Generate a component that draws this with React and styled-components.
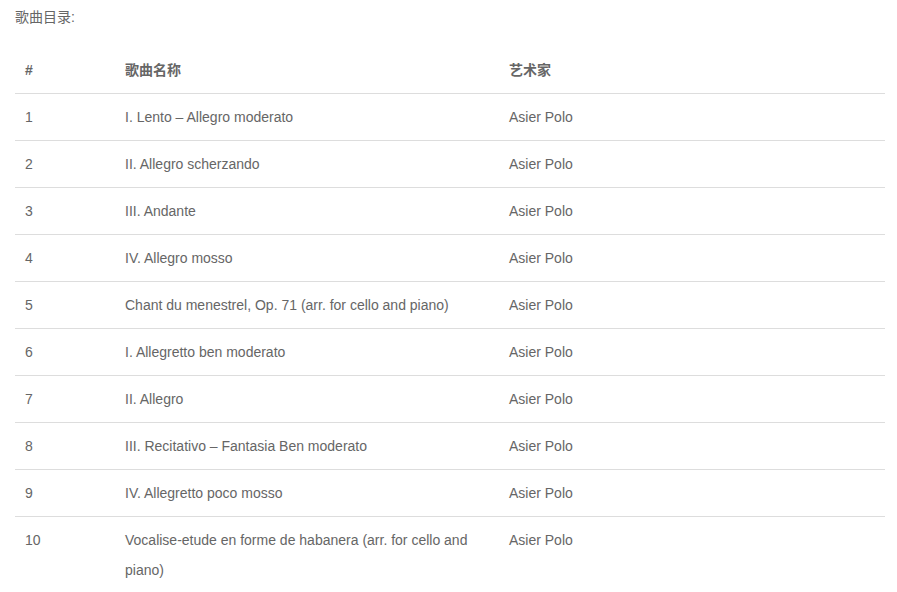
import React from "react";
import styled, { createGlobalStyle } from "styled-components";

const Global = createGlobalStyle`
  *, *::before, *::after { box-sizing: border-box; }
  html, body { margin: 0; padding: 0; background: #fff; }
  body {
    font-family: "Liberation Sans", Arial, "Noto Sans CJK SC", sans-serif;
    font-size: 14px;
    color: #666;
  }
`;

const Wrap = styled.div`
  padding: 2px 12px 0 15px;
`;

const Title = styled.div`
  line-height: 30px;
  margin-bottom: 15px;
`;

const Table = styled.table`
  width: 870px;
  border-collapse: collapse;
  table-layout: fixed;
`;

const Th = styled.th`
  text-align: left;
  font-weight: bold;
  padding: 8px 10px;
  line-height: 30px;
  border-bottom: 1px solid #ddd;
  width: ${(p) => p.$w}px;
`;

const Td = styled.td`
  padding: 8px 10px;
  line-height: 30px;
  vertical-align: top;
  border-top: ${(p) => (p.$first ? "none" : "1px solid #ddd")};
`;

const rows = [
  "I. Lento – Allegro moderato",
  "II. Allegro scherzando",
  "III. Andante",
  "IV. Allegro mosso",
  "Chant du menestrel, Op. 71 (arr. for cello and piano)",
  "I. Allegretto ben moderato",
  "II. Allegro",
  "III. Recitativo – Fantasia Ben moderato",
  "IV. Allegretto poco mosso",
  "Vocalise-etude en forme de habanera (arr. for cello and piano)",
];

export default function App() {
  return (
    <Wrap>
      <Global />
      <Title>歌曲目录:</Title>
      <Table>
        <thead>
          <tr>
            <Th $w={100}>#</Th>
            <Th $w={384}>歌曲名称</Th>
            <Th $w={386}>艺术家</Th>
          </tr>
        </thead>
        <tbody>
          {rows.map((r, i) => (
            <tr key={i}>
              <Td $first={i === 0}>{i + 1}</Td>
              <Td $first={i === 0}>{r}</Td>
              <Td $first={i === 0}>Asier Polo</Td>
            </tr>
          ))}
        </tbody>
      </Table>
    </Wrap>
  );
}
